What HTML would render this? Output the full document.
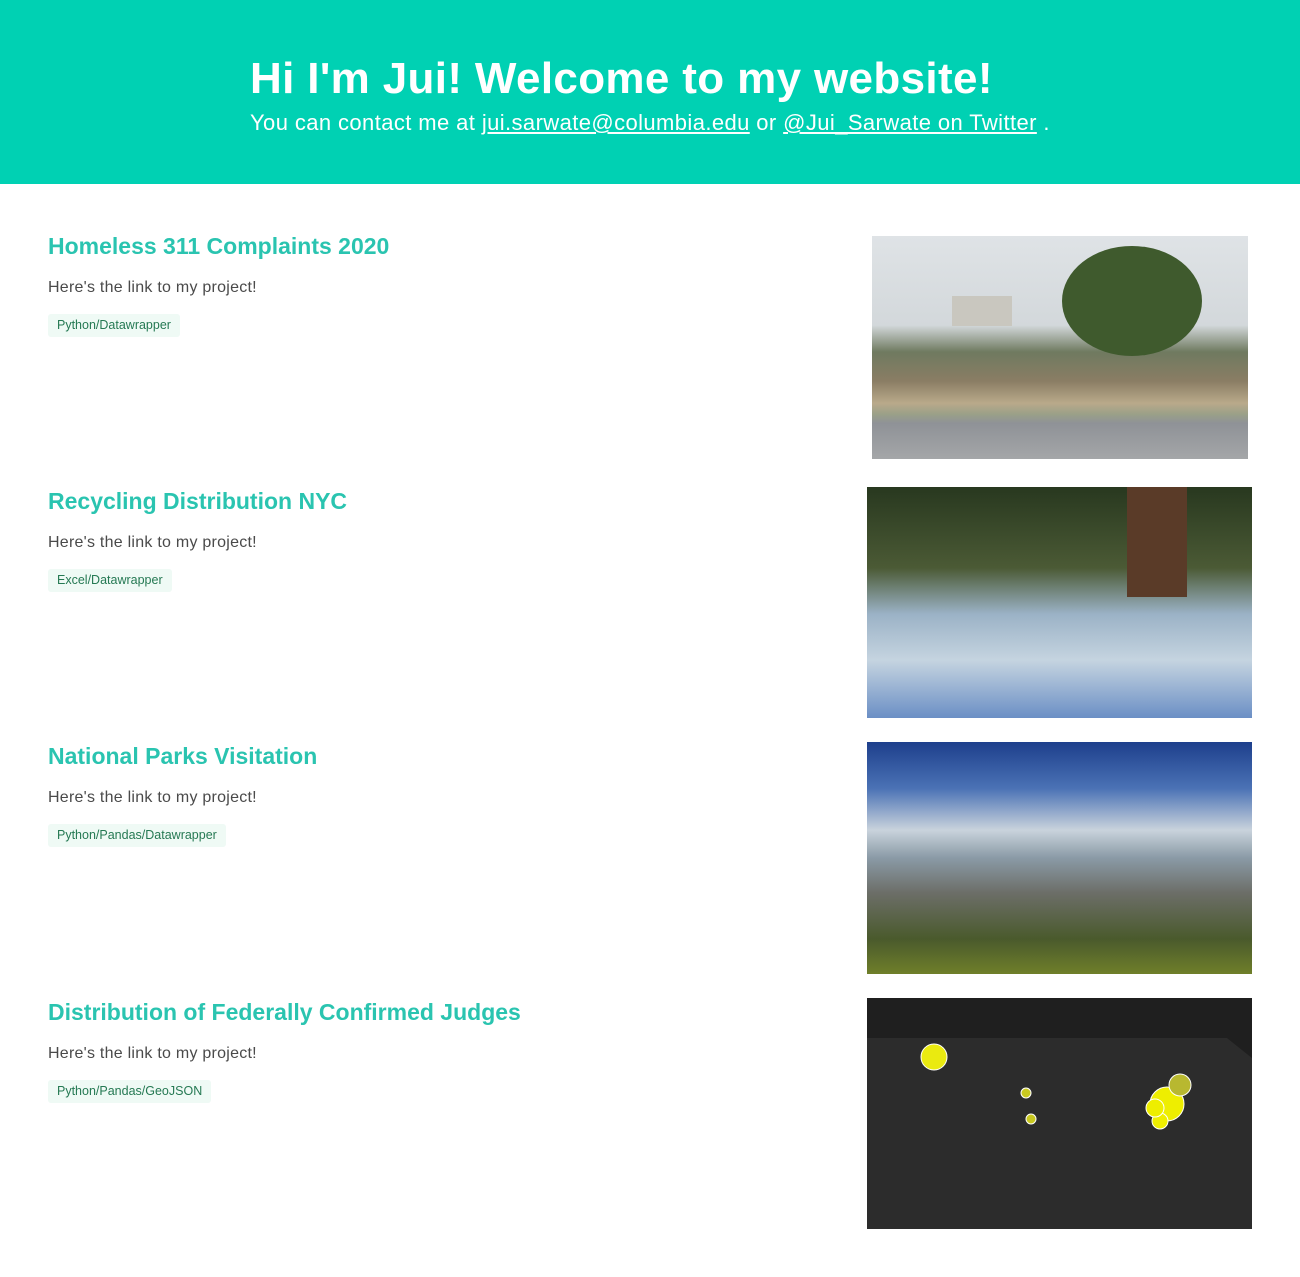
<!DOCTYPE html>
<html><head><meta charset="utf-8"><style>
*{margin:0;padding:0;box-sizing:border-box}
body{width:1300px;height:1277px;background:#fff;font-family:"Liberation Sans",sans-serif;position:relative;overflow:hidden}
.hero{position:absolute;left:0;top:0;width:1300px;height:184px;background:#00d1b3;color:#fff}
.hero h1{position:absolute;left:250px;top:54px;font-size:44px;font-weight:bold;letter-spacing:0.35px;white-space:nowrap}
.hero p{position:absolute;left:250px;top:110px;font-size:22px;letter-spacing:0.4px;white-space:nowrap}
.hero a{color:#fff;text-decoration:underline}
.item{position:absolute;left:48px}
.item h2{font-size:23px;font-weight:bold;color:#2ac4b0;letter-spacing:0;white-space:nowrap}
.item p{margin-top:19px;font-size:16px;color:#4a4a4a;letter-spacing:0.25px}
.tag{display:inline-block;margin-top:17px;background:#effaf5;color:#257953;font-size:12.5px;padding:0 9px;height:23px;line-height:23px;border-radius:3px}
.img{position:absolute;overflow:hidden}
</style></head><body>
<div class="hero"><h1>Hi I'm Jui! Welcome to my website!</h1>
<p>You can contact me at <a>jui.sarwate@columbia.edu</a> or <a>@Jui_Sarwate on Twitter</a> .</p></div>

<div class="item" style="top:233px"><h2>Homeless 311 Complaints 2020</h2><p>Here's the link to my project!</p><span class="tag">Python/Datawrapper</span></div>
<div class="item" style="top:488px"><h2>Recycling Distribution NYC</h2><p>Here's the link to my project!</p><span class="tag">Excel/Datawrapper</span></div>
<div class="item" style="top:743px"><h2>National Parks Visitation</h2><p>Here's the link to my project!</p><span class="tag">Python/Pandas/Datawrapper</span></div>
<div class="item" style="top:999px"><h2>Distribution of Federally Confirmed Judges</h2><p>Here's the link to my project!</p><span class="tag">Python/Pandas/GeoJSON</span></div>

<div class="img" style="left:872px;top:236px;width:376px;height:223px;background:linear-gradient(#dfe3e6 0%,#d3d8db 40%,#6f7a60 52%,#8a7d64 65%,#b9a98a 75%,#9aa088 80%,#8f9297 84%,#a4a6a8 100%)">
<div style="position:absolute;left:190px;top:10px;width:140px;height:110px;border-radius:50%;background:#3f5a2d"></div>
<div style="position:absolute;left:80px;top:60px;width:60px;height:30px;background:#c9c7bf"></div>
</div>
<div class="img" style="left:867px;top:487px;width:385px;height:231px;background:linear-gradient(#28381f 0%,#4b5a35 35%,#9bb2c6 55%,#c5d4e0 75%,#6b8fc5 100%)">
<div style="position:absolute;left:260px;top:0;width:60px;height:110px;background:#5a3b28"></div>
</div>
<div class="img" style="left:867px;top:742px;width:385px;height:232px;background:linear-gradient(#1d3f8c 0%,#4b72b5 20%,#c9d3dc 38%,#8a9aa6 50%,#6c6e68 65%,#4a5a2c 85%,#6f7f2a 100%)"></div>
<div class="img" style="left:867px;top:998px;width:385px;height:231px;background:#1f1f1f">
<svg width="385" height="231"><path d="M0 40 L360 40 L385 60 L385 231 L0 231Z" fill="#2c2c2c"/>
<circle cx="67" cy="59" r="13" fill="#eaea10" stroke="#fff"/>
<circle cx="159" cy="95" r="5" fill="#c8c820" stroke="#fff"/>
<circle cx="164" cy="121" r="5" fill="#c8c820" stroke="#fff"/>
<circle cx="300" cy="106" r="17" fill="#eeee00" stroke="#fff"/>
<circle cx="313" cy="87" r="11" fill="#b8b830" stroke="#fff"/>
<circle cx="293" cy="123" r="8" fill="#eeee00" stroke="#fff"/>
<circle cx="288" cy="110" r="9" fill="#eeee00" stroke="#fff"/></svg>
</div>
</body></html>
